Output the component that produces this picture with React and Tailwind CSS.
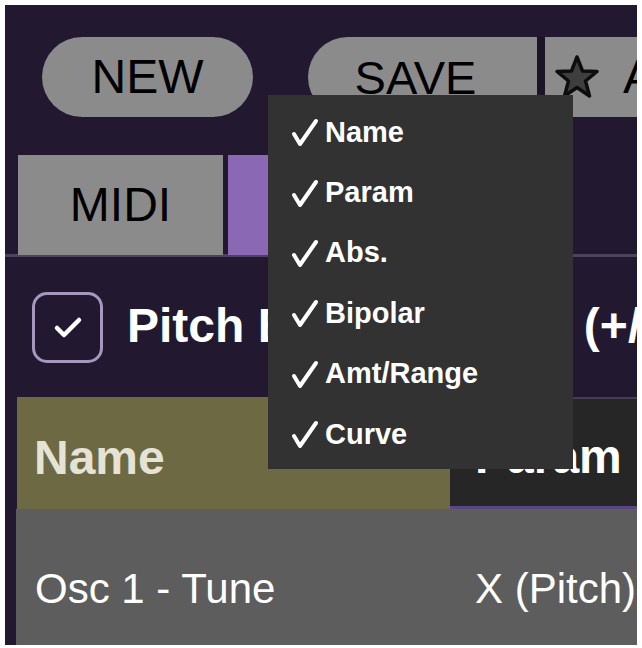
const menuItems = ['Name', 'Param', 'Abs.', 'Bipolar', 'Amt/Range', 'Curve'];

const Check = () => (
  <svg width="30" height="30" viewBox="0 0 30 30" className="shrink-0">
    <path d="M4 17 L10 27 L26 4" fill="none" stroke="white" strokeWidth="4" strokeLinecap="round" strokeLinejoin="round" />
  </svg>
);

const Star = () => (
  <svg width="48" height="46" viewBox="0 0 48 46" className="shrink-0">
    <polygon
      points="24,3 29.5,17 44,17.5 32.5,27 36.5,42 24,33.5 11.5,42 15.5,27 4,17.5 18.5,17"
      fill="#3e3e3e"
      stroke="#0d0d0d"
      strokeWidth="3.5"
      strokeLinejoin="round"
    />
  </svg>
);

export default function App() {
  return (
    <div className="w-[642px] h-[648px] bg-white pt-[5px] pl-[5px] overflow-hidden" style={{ fontFamily: '"Liberation Sans", Arial, sans-serif' }}>
      <div className="relative w-[632px] h-[640px] bg-[#221931] overflow-hidden flex flex-col">
        {/* top buttons */}
        <div className="flex items-center pt-[32px] h-[112px] shrink-0">
          <button className="shrink-0 ml-[37px] w-[211px] h-[80px] rounded-full bg-[#8b8b8b] text-black text-[48px] leading-none flex items-center justify-center">
            NEW
          </button>
          <div className="shrink-0 ml-[55px] flex h-[80px]">
            <button className="shrink-0 w-[229px] h-full rounded-l-[40px] bg-[#8b8b8b] text-black text-[47px] leading-none flex items-center justify-center pr-[14px]">
              SAVE
            </button>
            <div className="shrink-0 w-[8px] h-full bg-[#1a1424]" />
            <div className="shrink-0 w-[120px] h-full bg-[#8b8b8b] flex items-center pl-[8px] gap-[22px] text-black text-[48px] leading-none">
              <Star />
              <span>A</span>
            </div>
          </div>
        </div>

        {/* tabs */}
        <div className="mt-[38px] flex h-[102px] shrink-0 border-b-[3px] border-[#4d4261]">
          <div className="shrink-0 ml-[13px] w-[205px] h-[100px] bg-[#8b8b8b] text-black text-[48px] leading-none flex items-center justify-center">
            MIDI
          </div>
          <div className="shrink-0 ml-[5px] w-[290px] h-[100px] bg-[#8a68b3]" />
        </div>

        {/* title row */}
        <div className="flex items-center h-[140px] shrink-0 pl-[27px]">
          <div className="shrink-0 w-[71px] h-[71px] rounded-[15px] border-[3px] border-[#a597bd] flex items-center justify-center">
            <svg width="34" height="28" viewBox="0 0 34 28">
              <path d="M6 15 L13 22 L28 7" fill="none" stroke="white" strokeWidth="4.5" strokeLinecap="round" strokeLinejoin="round" />
            </svg>
          </div>
          <span className="ml-[24px] text-white font-bold text-[48px] leading-none whitespace-nowrap pb-[2px]">
            Pitch Bend Amount (+/- 2)
          </span>
        </div>

        {/* header */}
        <div className="flex h-[112px] shrink-0 pl-[12px]">
          <div className="shrink-0 w-[433px] bg-[#6d6a43] flex items-center pl-[17px] pt-[10px] text-[#e4e3d6] font-bold text-[48px] leading-none">
            Name
          </div>
          <div className="flex-1 bg-[#262626] border-t-2 border-[#463c58] border-b-[3px] border-b-[#5b4683] flex items-center pl-[25px] pt-[8px] text-white font-bold text-[48px] leading-none whitespace-nowrap">
            Param
          </div>
        </div>

        {/* row */}
        <div className="flex flex-1 pl-[11px] bg-[#221931]">
          <div className="flex-1 bg-[#5d5d5d] flex items-center pt-[24px] text-white text-[42px] leading-none whitespace-nowrap overflow-hidden">
            <span className="shrink-0 ml-[19px] w-[440px]">Osc 1 - Tune</span>
            <span>X (Pitch)</span>
          </div>
        </div>

        {/* dropdown menu */}
        <div className="absolute left-[263px] top-[90px] w-[305px] h-[374px] bg-[#323232] pt-[7px] flex flex-col">
          {menuItems.map((item) => (
            <div key={item} className="h-[60.4px] flex items-center pl-[22px] gap-[5px]">
              <Check />
              <span className="text-white font-bold text-[29px] leading-none">{item}</span>
            </div>
          ))}
        </div>
      </div>
    </div>
  );
}
